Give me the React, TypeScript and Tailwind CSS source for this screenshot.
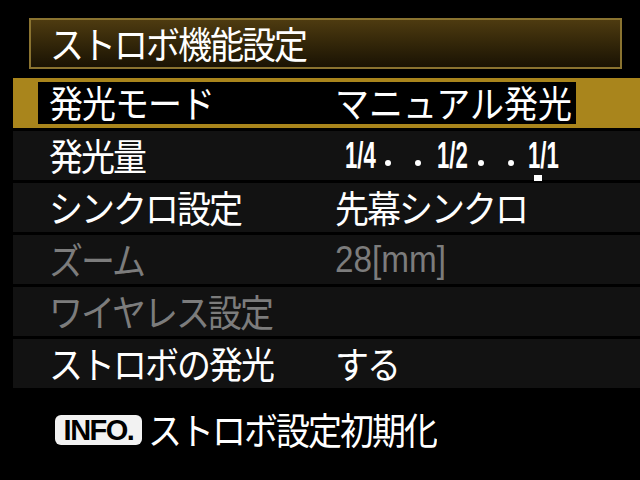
import React from 'react';

const jp = { fontFamily: '"Noto Sans CJK JP", "Noto Sans", sans-serif' };
const latin = { fontFamily: '"Liberation Sans", Arial, sans-serif' };

type Row = {
  label: string;
  value?: React.ReactNode;
  dim?: boolean;
  selected?: boolean;
};

function Num({ children, mark }: { children: string; mark?: boolean }) {
  return (
    <span className="relative inline-block w-[28px]">
      <span className="inline-block origin-left scale-x-[0.6] text-[37px] font-bold leading-none" style={latin}>
        {children}
      </span>
      {mark && <span className="absolute left-[6px] top-[38px] h-[6px] w-[8px] bg-white" />}
    </span>
  );
}

function Dot() {
  return <span className="mt-[14px] inline-block h-[6px] w-[6px] rounded-full bg-white" />;
}

function FlashScale() {
  return (
    <div className="ml-[10px] flex items-center text-white">
      <Num>1/4</Num>
      <span className="ml-[12px]" />
      <Dot />
      <span className="ml-[24px]" />
      <Dot />
      <span className="ml-[16px]" />
      <Num>1/2</Num>
      <span className="ml-[13px]" />
      <Dot />
      <span className="ml-[24px]" />
      <Dot />
      <span className="ml-[14px]" />
      <Num mark>1/1</Num>
    </div>
  );
}

const rows: Row[] = [
  { label: '発光モード', value: 'マニュアル発光', selected: true },
  { label: '発光量', value: <FlashScale /> },
  { label: 'シンクロ設定', value: '先幕シンクロ' },
  {
    label: 'ズーム',
    value: (
      <span className="inline-block origin-left scale-x-[0.9] text-[37px] font-medium" style={latin}>
        28[mm]
      </span>
    ),
    dim: true,
  },
  { label: 'ワイヤレス設定', dim: true },
  { label: 'ストロボの発光', value: 'する' },
];

function MenuRow({ row }: { row: Row }) {
  const color = row.dim ? 'text-[#7c7c7c]' : 'text-white';
  if (row.selected) {
    return (
      <div className="flex h-[50px] items-center bg-[#a9851c]">
        <div className="ml-[25px] flex h-[42px] w-[538px] items-center bg-black pl-[11px]">
          <span className={`w-[286px] text-[34px] leading-none tracking-[-1px] scale-y-110 ${color}`}>{row.label}</span>
          <span className={`text-[34px] leading-none scale-y-110 ${color}`}>{row.value}</span>
        </div>
      </div>
    );
  }
  return (
    <div className="flex h-[49px] items-center bg-[#121212] pl-[36px]">
      <span className={`w-[286px] text-[34px] leading-none tracking-[-2px] scale-y-110 ${color}`}>{row.label}</span>
      <div className={`flex h-full items-center text-[34px] leading-none ${color}`}>
        {typeof row.value === 'string' ? <span className="tracking-[-2px] scale-y-110">{row.value}</span> : row.value}
      </div>
    </div>
  );
}

export default function App() {
  return (
    <div className="relative h-[480px] w-[640px] overflow-hidden bg-black" style={jp}>
      {/* title */}
      <div className="ml-[29px] mt-[18px] flex h-[51px] w-[593px] items-center border-2 border-[#8a7330] bg-gradient-to-b from-[#4e3b10] to-[#1a1304] pl-[19px]">
        <span className="text-[34px] leading-none tracking-[-2px] text-white scale-y-110">ストロボ機能設定</span>
      </div>

      {/* menu rows */}
      <div className="ml-[13px] mt-[9px] flex flex-col gap-[3px]">
        {rows.map((r) => (
          <MenuRow key={r.label} row={r} />
        ))}
      </div>

      {/* footer */}
      <div className="ml-[55px] mt-[25px] flex items-center gap-[6px]">
        <div className="flex h-[30px] w-[87px] items-center justify-center rounded-[6px] bg-[#f2f2f2]">
          <span className="text-[29px] font-bold leading-none tracking-[-1.5px] text-black" style={latin}>
            INFO.
          </span>
        </div>
        <span className="text-[34px] leading-none tracking-[-2px] text-white scale-y-110">ストロボ設定初期化</span>
      </div>
    </div>
  );
}
